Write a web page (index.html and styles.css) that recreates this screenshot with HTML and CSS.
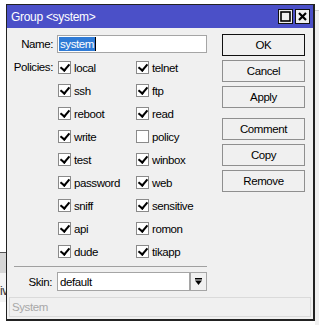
FILE: index.html
```html
<!DOCTYPE html>
<html>
<head>
<meta charset="utf-8">
<link rel="stylesheet" href="styles.css">
</head>
<body>
<div class="desk">
  <div class="bg-right"></div>
  <div class="bg-left"><span class="bg-text">iv</span></div>
  <div class="window">
    <div class="titlebar">
      <span class="title">Group &lt;system&gt;</span>
      <span class="tbtns">
        <span class="tbtn"><svg width="11" height="11" viewBox="0 0 11 11"><rect x="1" y="1" width="9" height="9" fill="none" stroke="#000" stroke-width="1.6"/></svg></span>
        <span class="tbtn"><svg width="11" height="11" viewBox="0 0 11 11"><path d="M2 2 L9 9 M9 2 L2 9" stroke="#000" stroke-width="2.2"/></svg></span>
      </span>
    </div>
    <div class="main">
      <div class="form">
        <div class="row">
          <span class="lbl">Name:</span>
          <div class="input name"><span class="sel">system</span><span class="caret"></span></div>
        </div>
        <div class="policies">
          <span class="lbl plbl">Policies:</span>
          <div class="checks">
            <label class="chk"><span class="box on"></span>local</label>
            <label class="chk"><span class="box on"></span>telnet</label>
            <label class="chk"><span class="box on"></span>ssh</label>
            <label class="chk"><span class="box on"></span>ftp</label>
            <label class="chk"><span class="box on"></span>reboot</label>
            <label class="chk"><span class="box on"></span>read</label>
            <label class="chk"><span class="box on"></span>write</label>
            <label class="chk"><span class="box"></span>policy</label>
            <label class="chk"><span class="box on"></span>test</label>
            <label class="chk"><span class="box on"></span>winbox</label>
            <label class="chk"><span class="box on"></span>password</label>
            <label class="chk"><span class="box on"></span>web</label>
            <label class="chk"><span class="box on"></span>sniff</label>
            <label class="chk"><span class="box on"></span>sensitive</label>
            <label class="chk"><span class="box on"></span>api</label>
            <label class="chk"><span class="box on"></span>romon</label>
            <label class="chk"><span class="box on"></span>dude</label>
            <label class="chk"><span class="box on"></span>tikapp</label>
          </div>
        </div>
        <div class="sep"></div>
        <div class="row skin-row">
          <span class="lbl">Skin:</span>
          <div class="input skin">default</div>
          <div class="dd"><svg width="9" height="9" viewBox="0 0 9 9"><rect x="1" y="1" width="7" height="1.5" fill="#000"/><path d="M1 3.5 H8 L4.5 8 Z" fill="#000"/></svg></div>
        </div>
      </div>
      <div class="buttons">
        <div class="btn default">OK</div>
        <div class="btn">Cancel</div>
        <div class="btn">Apply</div>
        <div class="btn gap">Comment</div>
        <div class="btn">Copy</div>
        <div class="btn">Remove</div>
      </div>
    </div>
    <div class="status"><div class="statusbox">System</div></div>
  </div>
</div>
</body>
</html>
```
FILE: styles.css
```css
* { box-sizing: border-box; }
html, body { margin: 0; padding: 0; }
body {
  width: 319px;
  height: 325px;
  overflow: hidden;
  background: #ffffff;
  font-family: "Liberation Sans", Arial, sans-serif;
  font-size: 11.5px;
  letter-spacing: -0.4px;
  color: #000;
}
.desk {
  position: relative;
  width: 319px;
  height: 325px;
  padding: 4px 0 0 6px;
}
.bg-right {
  position: absolute;
  left: 315px;
  top: 10px;
  width: 4px;
  height: 315px;
  background: #f0f0f0;
  border-top: 1px solid #cfcfcf;
}
.bg-left {
  position: absolute;
  left: 0;
  top: 252px;
  width: 12px;
  height: 50px;
  border-top: 1px solid #555;
  background: linear-gradient(#d6d6d6 0 20px, #f4f4f4 20px);
}
.bg-text {
  position: absolute;
  left: 0;
  top: 31px;
  font-size: 12px;
  color: #333;
}
.window {
  position: relative;
  width: 309px;
  height: 317px;
  border: 1px solid #222;
  border-right-width: 2px;
  border-bottom-width: 2px;
  background: #f0f0f0;
  display: flex;
  flex-direction: column;
}
.titlebar {
  height: 23px;
  background: #4b50c8;
  color: #fff;
  font-size: 12px;
  letter-spacing: -0.3px;
  display: flex;
  align-items: center;
  justify-content: space-between;
  padding: 0 3px 0 4px;
  flex: none;
}
.tbtns { display: flex; gap: 2px; }
.tbtn {
  width: 15px;
  height: 15px;
  background: #f0f0f0;
  border: 1px solid #111;
  display: flex;
  align-items: center;
  justify-content: center;
}
.main {
  display: flex;
  padding-top: 6px;
}
.form {
  width: 215px;
  padding-top: 1px;
}
.row {
  display: flex;
  align-items: center;
  height: 18px;
}
.lbl {
  width: 47px;
  text-align: right;
  padding-right: 1px;
  margin-right: 3px;
  flex: none;
}
.input {
  height: 18px;
  background: #fff;
  border: 1px solid #a5a5a5;
  display: flex;
  align-items: center;
  padding-left: 1px;
}
.input.name { width: 150px; }
.sel {
  background: #2f7bd6;
  color: #fff;
  height: 14px;
  line-height: 14px;
  padding: 0 1px;
}
.caret { width: 1px; height: 14px; background: #000; }
.policies {
  display: flex;
  margin-top: 3px;
}
.plbl {
  height: 23px;
  line-height: 23px;
  margin-right: 4px;
}
.checks {
  display: grid;
  grid-template-columns: 78px 78px;
  grid-auto-rows: 23px;
}
.chk {
  display: flex;
  align-items: center;
  gap: 3px;
}
.box {
  width: 13px;
  height: 13px;
  border: 1px solid #8a8a8a;
  background: #fff;
  flex: none;
  position: relative;
}
.box.on::after {
  content: "";
  position: absolute;
  left: 3px;
  top: 0px;
  width: 4px;
  height: 7px;
  border-right: 2.5px solid #000;
  border-bottom: 2.5px solid #000;
  transform: rotate(40deg);
}
.sep {
  margin: 3px 0 0 7px;
  width: 193px;
  height: 1px;
  background: #a0a0a0;
}
.skin-row {
  margin-top: 5px;
  height: 19px;
}
.skin-row .lbl { width: 46px; margin-right: 4px; }
.input.skin { width: 133px; height: 19px; padding-left: 2px; }
.dd {
  width: 17px;
  height: 19px;
  border: 1px solid #a5a5a5;
  background: #f0f0f0;
  display: flex;
  align-items: center;
  justify-content: center;
}
.buttons {
  width: 83px;
  display: flex;
  flex-direction: column;
  gap: 4px;
}
.btn {
  height: 22px;
  border: 1px solid #8f8f8f;
  background: #f0f0f0;
  display: flex;
  align-items: center;
  justify-content: center;
}
.btn.default { border-color: #111; }
.btn.gap { margin-top: 6px; }
.status {
  margin-top: auto;
  padding: 0 2px 2px 2px;
}
.statusbox {
  height: 20px;
  border: 1px solid #dadada;
  color: #a8a8a8;
  padding-left: 2px;
  display: flex;
  align-items: center;
}
```
